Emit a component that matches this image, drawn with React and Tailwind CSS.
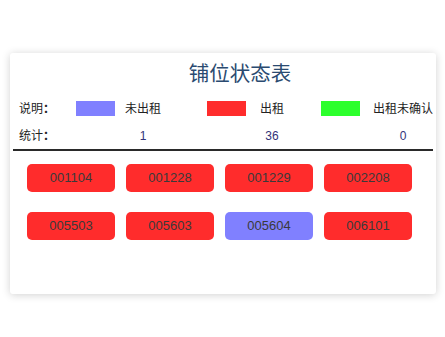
export default function App() {
  const shops = [
    { id: "001104", s: 1 },
    { id: "001228", s: 1 },
    { id: "001229", s: 1 },
    { id: "002208", s: 1 },
    { id: "005503", s: 1 },
    { id: "005603", s: 1 },
    { id: "005604", s: 0 },
    { id: "006101", s: 1 },
  ];
  return (
    <div
      className="w-[445px] h-[337px] bg-white pt-[53px] pl-[10px]"
      style={{ fontFamily: '"Liberation Sans", "Noto Sans CJK SC", sans-serif' }}
    >
      <div className="w-[426px] h-[241px] bg-white rounded-[3px] shadow-[0_1px_8px_rgba(0,0,0,0.18)] px-[3px]">
        <div className="h-[42px] flex items-center justify-center pl-[34px] text-[20.5px] text-[#2a4a70]">
          铺位状态表
        </div>
        <div className="grid grid-cols-[57px_49px_82px_53px_61px_52px_auto] pl-[6px] text-[12px] text-[#222]">
          <div className="h-[27px] flex items-center">说明<span className="font-bold">：</span></div>
          <div className="h-[27px] flex items-center"><div className="w-[39px] h-[15px] bg-[#8080ff]" /></div>
          <div className="h-[27px] flex items-center">未出租</div>
          <div className="h-[27px] flex items-center"><div className="w-[39px] h-[15px] bg-[#ff2c2c]" /></div>
          <div className="h-[27px] flex items-center">出租</div>
          <div className="h-[27px] flex items-center"><div className="w-[39px] h-[15px] bg-[#2cff2c]" /></div>
          <div className="h-[27px] flex items-center">出租未确认</div>

          <div className="h-[27px] flex items-center">统计<span className="font-bold">：</span></div>
          <div />
          <div className="h-[27px] flex items-center"><div className="w-[36px] text-center text-[#33337a]">1</div></div>
          <div />
          <div className="h-[27px] flex items-center"><div className="w-[24px] text-center text-[#33337a]">36</div></div>
          <div />
          <div className="h-[27px] flex items-center"><div className="w-[60px] text-center text-[#33337a]">0</div></div>
        </div>
        <div className="h-[1.5px] bg-[#2a2a2a]" />
        <div className="grid grid-cols-[88px_88px_88px_88px] gap-x-[11px] gap-y-[20px] mt-[13px] pl-[14px]">
          {shops.map((x) => (
            <div
              key={x.id}
              className={
                "h-[28px] rounded-[5px] flex items-center justify-center text-[13px] text-[#3a3a3a] " +
                (x.s ? "bg-[#ff2c2c]" : "bg-[#8080ff]")
              }
            >
              {x.id}
            </div>
          ))}
        </div>
      </div>
    </div>
  );
}
